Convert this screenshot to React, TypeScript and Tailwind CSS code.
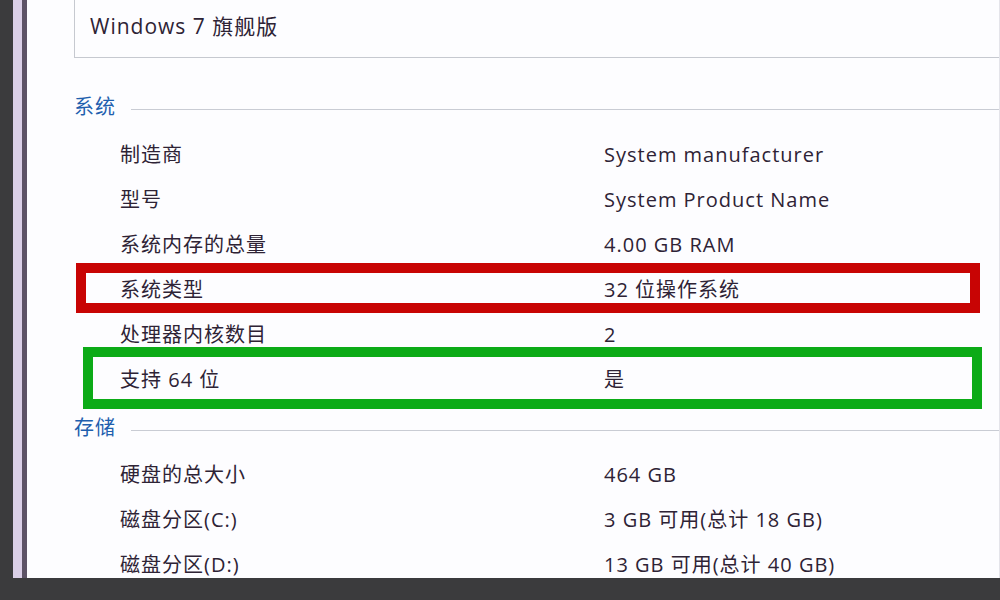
import React from 'react';

type Row = { label: string; value: string; mark?: 'red' | 'green' };

const system: Row[] = [
  { label: '制造商', value: 'System manufacturer' },
  { label: '型号', value: 'System Product Name' },
  { label: '系统内存的总量', value: '4.00 GB RAM' },
  { label: '系统类型', value: '32 位操作系统', mark: 'red' },
  { label: '处理器内核数目', value: '2' },
  { label: '支持 64 位', value: '是', mark: 'green' },
];

const storage: Row[] = [
  { label: '硬盘的总大小', value: '464 GB' },
  { label: '磁盘分区(C:)', value: '3 GB 可用(总计 18 GB)' },
  { label: '磁盘分区(D:)', value: '13 GB 可用(总计 40 GB)' },
];

function SectionHeading({ title }: { title: string }) {
  return (
    <div className="flex h-[30px] items-center pl-[47px]">
      <span className="text-[20px] tracking-[1px] text-[#1f5fae]">{title}</span>
      <div className="ml-[15px] mt-[4px] h-px flex-1 bg-[#c9ccd4]" />
    </div>
  );
}

function InfoRow({ row }: { row: Row }) {
  return (
    <div className="relative grid h-[45px] grid-cols-[484px_1fr] items-center pl-[93px] text-[20px] tracking-[1px] text-[#2e2335]">
      <span>{row.label}</span>
      <span>{row.value}</span>
      {/* annotation boxes drawn over the row */}
      {row.mark === 'red' && (
        <div className="absolute left-[49px] top-[-4px] h-[50px] w-[904px] border-[10px] border-[#c80404]" />
      )}
      {row.mark === 'green' && (
        <div className="absolute left-[56px] top-[-10px] h-[62px] w-[899px] border-[10px] border-[#0cab17]" />
      )}
    </div>
  );
}

export default function App() {
  return (
    <div
      className="flex h-[600px] w-[1000px] flex-col bg-[#3b3b3d]"
      style={{ fontFamily: '"Open Sans", "Noto Sans CJK SC", sans-serif' }}
    >
      <div className="flex h-[578px]">
        <div className="w-[13px]" />
        <div className="w-[9px] bg-[#dacfe7]" />
        <div className="w-[5px] bg-[#5d5366]" />
        <div className="flex-1 overflow-hidden border-r border-[#e4e4ea] bg-[#fdfdff]">
          <div className="ml-[47px] flex h-[58px] items-center border-b border-l border-[#c6c9d0] pl-[15px] pb-[4px]">
            <span className="text-[21px] tracking-[1px] text-[#2e2335]">Windows 7 旗舰版</span>
          </div>

          <div className="mt-[34px]">
            <SectionHeading title="系统" />
          </div>
          <div className="mt-[10px]">
            {system.map((r) => (
              <InfoRow key={r.label} row={r} />
            ))}
          </div>

          <div className="mt-[11px]">
            <SectionHeading title="存储" />
          </div>
          <div className="mt-[9px]">
            {storage.map((r) => (
              <InfoRow key={r.label} row={r} />
            ))}
          </div>
        </div>
      </div>
    </div>
  );
}
